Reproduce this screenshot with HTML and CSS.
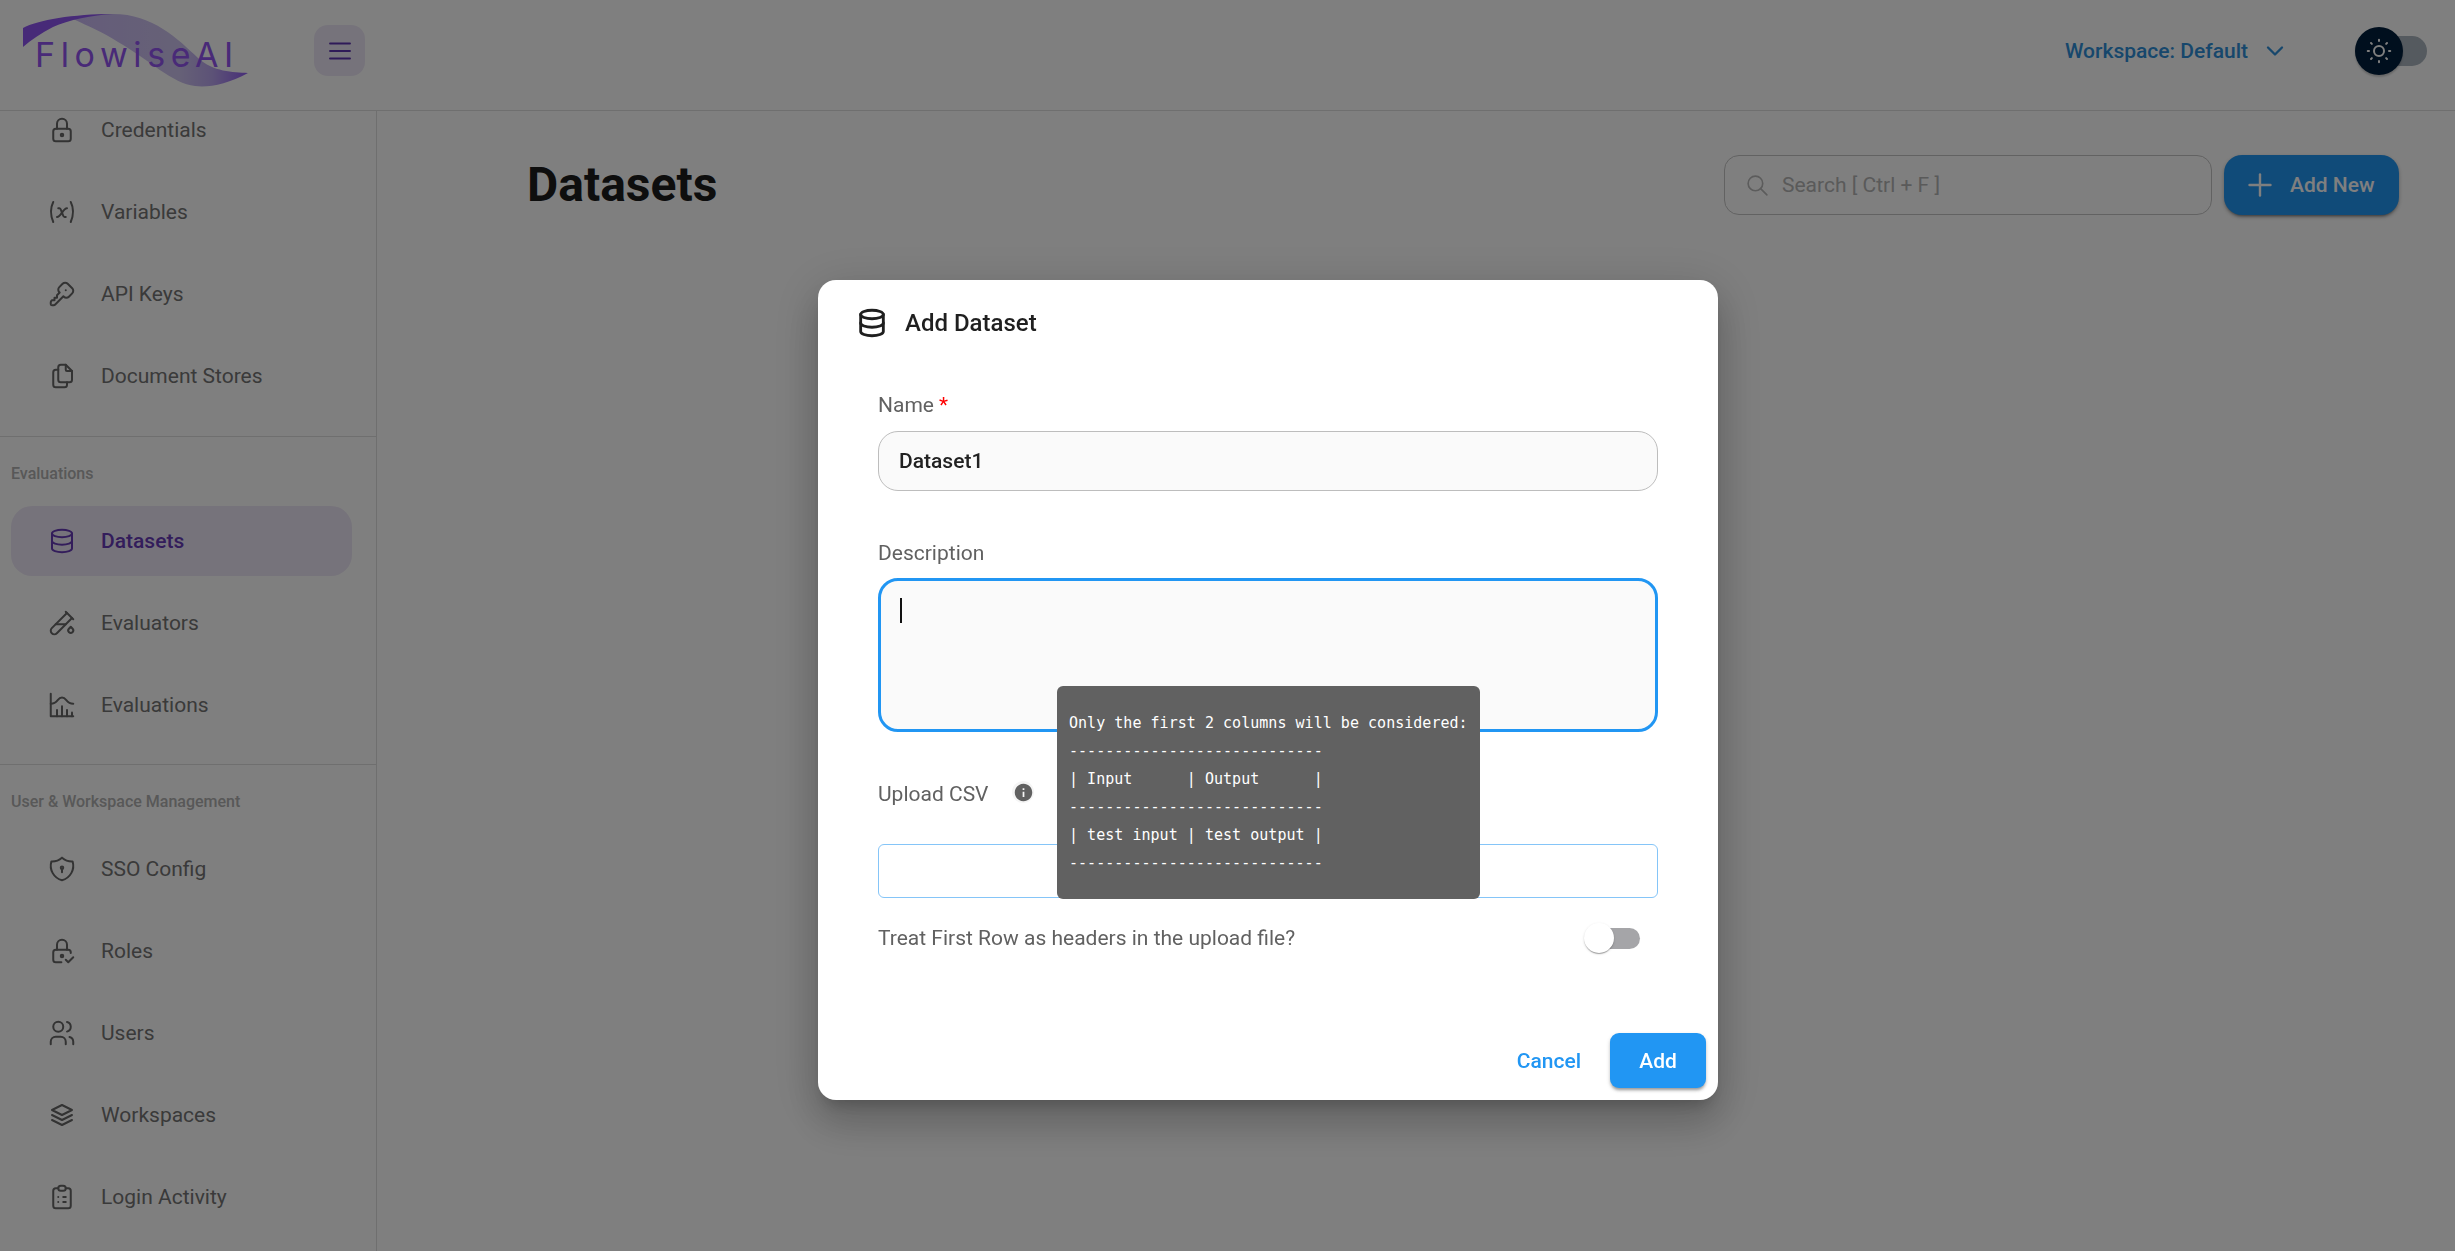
FILE: index.html
```html
<!DOCTYPE html>
<html lang="en">
<head>
<meta charset="utf-8">
<title>Datasets - FlowiseAI</title>
<link rel="stylesheet" href="styles.css">
</head>
<body>
<div class="app">
  <header class="topbar">
    <div class="logo">
      <svg class="logo-wave" viewBox="0 0 225 73" aria-hidden="true">
        <defs>
          <linearGradient id="wave" x1="0" y1="0" x2="1" y2="0">
            <stop offset="0" stop-color="#c9b8f4"/>
            <stop offset="0.6" stop-color="#cdc3ee"/>
            <stop offset="0.8" stop-color="#b9a4ee"/>
            <stop offset="1" stop-color="#8f5cf0"/>
          </linearGradient>
        </defs>
        <path fill="url(#wave)" d="M50 5C65 1 78 0 90 0C130 0 155 25 175 44C190 58 210 58 225 59C205 70 185 74 172 72C150 70 125 45 95 28C80 18 65 12 50 5Z"/>
        <path fill="#8f55f0" d="M0 14C15 6 50 0 90 0C70 1 45 6 30 13C18 19 8 26 0 33Z"/>
      </svg>
      <span class="logo-text">FlowiseAI</span>
    </div>
    <button class="menu-btn" type="button" aria-label="Menu">
      <svg class="icon" viewBox="0 0 24 24"><path d="M4 6h16M4 12h16M4 18h16"/></svg>
    </button>
    <div class="topbar-spacer"></div>
    <span class="workspace">Workspace: Default</span>
    <svg class="icon chevron" viewBox="0 0 24 24"><path d="M6 9l6 6l6 -6"/></svg>
    <div class="theme-toggle">
      <div class="theme-thumb">
        <svg class="icon" viewBox="0 0 24 24"><path d="M12 12m-4 0a4 4 0 1 0 8 0a4 4 0 1 0 -8 0"/><path d="M3 12h1m8 -9v1m8 8h1m-9 8v1m-6.4 -15.4l.7 .7m12.1 -.7l-.7 .7m0 11.4l.7 .7m-12.1 -.7l-.7 .7"/></svg>
      </div>
    </div>
  </header>

  <div class="body-row">
    <nav class="sidebar">
      <div class="nav-scroll">
        <a class="nav-item"><svg class="icon" viewBox="0 0 24 24"><rect x="5" y="11" width="14" height="10" rx="2"/><circle cx="12" cy="16" r="1"/><path d="M8 11v-4a4 4 0 0 1 8 0v4"/></svg><span>Credentials</span></a>
        <a class="nav-item"><svg class="icon" viewBox="0 0 24 24"><path d="M5 4c-2.5 5 -2.5 10 0 16m14 -16c2.5 5 2.5 10 0 16m-10 -11h1c1 0 1 1 2.016 3.527c.984 2.473 .984 3.473 1.984 3.473h1"/><path d="M8 16c1.5 0 3 -2 4 -3.5s2.5 -3.5 4 -3.5"/></svg><span>Variables</span></a>
        <a class="nav-item"><svg class="icon" viewBox="0 0 24 24"><path d="M16.555 3.843l3.602 3.602a2.877 2.877 0 0 1 0 4.069l-2.643 2.643a2.877 2.877 0 0 1 -4.069 0l-.301 -.301l-6.558 6.558a2 2 0 0 1 -1.239 .578l-.175 .008h-1.172a1 1 0 0 1 -.993 -.883l-.007 -.117v-1.172a2 2 0 0 1 .467 -1.284l.119 -.13l.414 -.414h2v-2h2v-2l2.144 -2.144l-.301 -.301a2.877 2.877 0 0 1 0 -4.069l2.643 -2.643a2.877 2.877 0 0 1 4.069 0z"/><path d="M15 9h.01"/></svg><span>API Keys</span></a>
        <a class="nav-item"><svg class="icon" viewBox="0 0 24 24"><path d="M15 3v4a1 1 0 0 0 1 1h4"/><path d="M18 17h-7a2 2 0 0 1 -2 -2v-10a2 2 0 0 1 2 -2h4l5 5v7a2 2 0 0 1 -2 2z"/><path d="M16 17v2a2 2 0 0 1 -2 2h-7a2 2 0 0 1 -2 -2v-10a2 2 0 0 1 2 -2h2"/></svg><span>Document Stores</span></a>

        <div class="nav-divider"></div>
        <div class="nav-label">Evaluations</div>
        <a class="nav-item is-active"><svg class="icon" viewBox="0 0 24 24"><path d="M12 6m-8 0a8 3 0 1 0 16 0a8 3 0 1 0 -16 0"/><path d="M4 6v6a8 3 0 0 0 16 0v-6"/><path d="M4 12v6a8 3 0 0 0 16 0v-6"/></svg><span>Datasets</span></a>
        <a class="nav-item"><svg class="icon" viewBox="0 0 24 24"><path d="M20 8.04l-12.122 12.124a2.857 2.857 0 1 1 -4.041 -4.04l12.122 -12.124"/><path d="M7 13h8"/><path d="M19 15l1.5 1.6a2 2 0 1 1 -3 0l1.5 -1.6z"/><path d="M15 3l6 6"/></svg><span>Evaluators</span></a>
        <a class="nav-item"><svg class="icon" viewBox="0 0 24 24"><path d="M3 3v18h18"/><path d="M20 18v3"/><path d="M16 16v5"/><path d="M12 13v8"/><path d="M8 16v5"/><path d="M3 11c6 0 5 -5 9 -5s3 5 9 5"/></svg><span>Evaluations</span></a>

        <div class="nav-divider"></div>
        <div class="nav-label">User &amp; Workspace Management</div>
        <a class="nav-item"><svg class="icon" viewBox="0 0 24 24"><path d="M12 3a12 12 0 0 0 8.5 3a12 12 0 0 1 -8.5 15a12 12 0 0 1 -8.5 -15a12 12 0 0 0 8.5 -3"/><path d="M12 11m-1 0a1 1 0 1 0 2 0a1 1 0 1 0 -2 0"/><path d="M12 12l0 2.5"/></svg><span>SSO Config</span></a>
        <a class="nav-item"><svg class="icon" viewBox="0 0 24 24"><path d="M11.5 21h-4.5a2 2 0 0 1 -2 -2v-6a2 2 0 0 1 2 -2h10a2 2 0 0 1 2 2v.5"/><path d="M11 16a1 1 0 1 0 2 0a1 1 0 0 0 -2 0"/><path d="M8 11v-4a4 4 0 1 1 8 0v4"/><path d="M15 19l2 2l4 -4"/></svg><span>Roles</span></a>
        <a class="nav-item"><svg class="icon" viewBox="0 0 24 24"><path d="M9 7m-4 0a4 4 0 1 0 8 0a4 4 0 1 0 -8 0"/><path d="M3 21v-2a4 4 0 0 1 4 -4h4a4 4 0 0 1 4 4v2"/><path d="M16 3.13a4 4 0 0 1 0 7.75"/><path d="M21 21v-2a4 4 0 0 0 -3 -3.85"/></svg><span>Users</span></a>
        <a class="nav-item"><svg class="icon" viewBox="0 0 24 24"><path d="M12 4l-8 4l8 4l8 -4l-8 -4"/><path d="M4 12l8 4l8 -4"/><path d="M4 16l8 4l8 -4"/></svg><span>Workspaces</span></a>
        <a class="nav-item"><svg class="icon" viewBox="0 0 24 24"><path d="M9 5h-2a2 2 0 0 0 -2 2v12a2 2 0 0 0 2 2h10a2 2 0 0 0 2 -2v-12a2 2 0 0 0 -2 -2h-2"/><path d="M9 3m0 2a2 2 0 0 1 2 -2h2a2 2 0 0 1 2 2v0a2 2 0 0 1 -2 2h-2a2 2 0 0 1 -2 -2z"/><path d="M9 12l.01 0"/><path d="M13 12l2 0"/><path d="M9 16l.01 0"/><path d="M13 16l2 0"/></svg><span>Login Activity</span></a>
      </div>
    </nav>

    <main class="content">
      <div class="page-head">
        <h1 class="page-title">Datasets</h1>
        <div class="page-spacer"></div>
        <div class="search-box">
          <svg class="icon" viewBox="0 0 24 24"><path d="M10 10m-7 0a7 7 0 1 0 14 0a7 7 0 1 0 -14 0"/><path d="M21 21l-6 -6"/></svg>
          <span class="search-placeholder">Search [ Ctrl + F ]</span>
        </div>
        <button class="add-new" type="button">
          <svg class="icon" viewBox="0 0 24 24"><path d="M12 5v14"/><path d="M5 12h14"/></svg>
          <span>Add New</span>
        </button>
      </div>
    </main>
  </div>
</div>

<div class="backdrop">
  <section class="dialog" role="dialog" aria-label="Add Dataset">
    <div class="dialog-title">
      <svg class="icon" viewBox="0 0 24 24"><path d="M12 6m-8 0a8 3 0 1 0 16 0a8 3 0 1 0 -16 0"/><path d="M4 6v6a8 3 0 0 0 16 0v-6"/><path d="M4 12v6a8 3 0 0 0 16 0v-6"/></svg>
      <span>Add Dataset</span>
    </div>
    <div class="dialog-body">
      <div class="field-label field-name">Name <span class="required">*</span></div>
      <div class="text-input">Dataset1</div>
      <div class="field-label field-desc">Description</div>
      <div class="text-area"><span class="caret"></span></div>
      <div class="field-label field-upload">
        <span>Upload CSV</span>
        <span class="info-dot">
          <svg viewBox="0 0 24 24"><path d="M12 2C6.48 2 2 6.48 2 12s4.48 10 10 10 10-4.48 10-10S17.52 2 12 2zm1 15h-2v-6h2v6zm0-8h-2V7h2v2z"/></svg>
        </span>
      </div>
      <div class="file-box"></div>
      <div class="switch-row">
        <span class="field-text">Treat First Row as headers in the upload file?</span>
        <span class="switch"><span class="switch-thumb"></span></span>
      </div>
    </div>
    <div class="dialog-actions">
      <button class="btn-cancel" type="button">Cancel</button>
      <button class="btn-add" type="button">Add</button>
    </div>
    <pre class="tooltip">Only the first 2 columns will be considered:
----------------------------
| Input      | Output      |
----------------------------
| test input | test output |
----------------------------</pre>
  </section>
</div>
</body>
</html>
```
FILE: styles.css
```css
* { box-sizing: border-box; }
html, body { height: 100%; }
body {
  margin: 0;
  background: #fff;
  font-family: Roboto, "Liberation Sans", sans-serif;
  overflow: hidden;
}
button { font-family: inherit; border: 0; cursor: pointer; }
.icon {
  fill: none;
  stroke: currentColor;
  stroke-width: 1.6;
  stroke-linecap: round;
  stroke-linejoin: round;
  flex: none;
}

.app { height: 1251px; display: flex; flex-direction: column; }

/* top bar */
.topbar {
  height: 111px;
  flex: none;
  display: flex;
  align-items: center;
  padding: 0 28px 9px 23px;
  border-bottom: 1px solid #dedede;
}
.logo { position: relative; width: 225px; height: 73px; flex: none; }
.logo-wave { position: absolute; inset: 0; width: 225px; height: 73px; }
.logo-text {
  position: absolute;
  left: 12px;
  top: 19px;
  font-family: Inter, "Open Sans", sans-serif;
  font-size: 34px;
  line-height: 44px;
  letter-spacing: 5.6px;
  color: #9354f0;
  white-space: nowrap;
}
.menu-btn {
  margin-left: 66px;
  width: 51px;
  height: 51px;
  border-radius: 14px;
  background: #ede7f6;
  color: #5e35b1;
  display: flex;
  align-items: center;
  justify-content: center;
  padding: 0;
}
.menu-btn .icon { width: 30px; height: 30px; stroke-width: 1.5; }
.topbar-spacer { flex: 1; }
.workspace { font-size: 21px; font-weight: 500; color: #2f8fd8; }
.chevron { width: 28px; height: 28px; margin-left: 13px; color: #2f8fd8; stroke-width: 2; }
.theme-toggle {
  position: relative;
  margin-left: 66px;
  width: 72px;
  height: 30px;
  border-radius: 15px;
  background: #aab4be;
}
.theme-thumb {
  position: absolute;
  left: 0;
  top: -9px;
  width: 48px;
  height: 48px;
  border-radius: 50%;
  background: #001e3c;
  color: #fff;
  display: flex;
  align-items: center;
  justify-content: center;
  box-shadow: 0 2px 2px rgba(0,0,0,.2);
}
.theme-thumb .icon { width: 30px; height: 30px; }

/* layout */
.body-row { flex: 1; display: flex; min-height: 0; }
.sidebar {
  width: 377px;
  flex: none;
  border-right: 1px solid #dedede;
  overflow: hidden;
  padding: 0 24px 0 11px;
}
.nav-scroll { margin-top: -16px; }
.nav-item {
  height: 70px;
  margin-bottom: 12px;
  padding-left: 36px;
  display: flex;
  align-items: center;
  gap: 24px;
  border-radius: 21px;
  font-size: 21px;
  color: #747474;
}
.nav-item .icon { width: 30px; height: 30px; color: #666; }
.nav-item.is-active { background: #ede7f6; color: #673ab7; font-weight: 500; }
.nav-item.is-active .icon { color: #673ab7; }
.nav-divider { height: 1px; margin: 24.6px -24px 0 -11px; background: #dedede; }
.nav-label {
  height: 24px;
  margin-top: 25px;
  margin-bottom: 20px;
  line-height: 24px;
  font-size: 16px;
  font-weight: 500;
  color: #b0b0b0;
  white-space: nowrap;
}

.content { flex: 1; min-width: 0; padding: 44px 56px 0 150px; }
.page-head { display: flex; align-items: center; height: 60px; }
.page-title { margin: 0; font-size: 48px; font-weight: 700; color: #1c1c1c; line-height: 60px; }
.page-spacer { flex: 1; }
.search-box {
  width: 488px;
  height: 60px;
  border: 1px solid #c4c4c4;
  border-radius: 15px;
  display: flex;
  align-items: center;
  padding-left: 20px;
  gap: 12px;
}
.search-box .icon { width: 25px; height: 25px; color: #b9b9b9; }
.search-placeholder { font-size: 21px; color: #b4b4b4; }
.add-new {
  margin-left: 12px;
  width: 175px;
  height: 60px;
  border-radius: 18px;
  background: #2196f3;
  color: #fff;
  display: flex;
  align-items: center;
  padding: 0 0 0 18px;
  gap: 12px;
  font-size: 21px;
  font-weight: 500;
  box-shadow: 0 3px 3px -2px rgba(0,0,0,.4), 0 2px 4px rgba(0,0,0,.25);
}
.add-new .icon { width: 36px; height: 36px; stroke-width: 1.6; }

/* modal */
.backdrop { position: fixed; inset: 0; background: rgba(0,0,0,.5); }
.dialog {
  position: absolute;
  left: 818px;
  top: 280px;
  width: 900px;
  height: 820px;
  background: #fff;
  border-radius: 18px;
  display: flex;
  flex-direction: column;
  box-shadow: 0 11px 15px -7px rgba(0,0,0,.2), 0 24px 38px 3px rgba(0,0,0,.14), 0 9px 46px 8px rgba(0,0,0,.12);
}
.dialog-title {
  margin-top: 26px;
  height: 34px;
  padding-left: 37px;
  display: flex;
  align-items: center;
  gap: 16px;
  font-size: 24px;
  font-weight: 500;
  color: #1f1f1f;
}
.dialog-title .icon { width: 34px; height: 34px; stroke-width: 2; }
.dialog-body { padding: 0 60px; flex: 1; }
.field-label, .field-text { font-size: 21px; color: #616161; }
.field-label { height: 32px; line-height: 32px; display: flex; align-items: center; gap: 5px; }
.field-name { margin-top: 49px; }
.field-desc { margin-top: 46px; }
.field-upload { margin-top: 46px; gap: 24px; }
.required { color: #f00; }
.text-input {
  margin-top: 10px;
  height: 60px;
  border: 1px solid #bdbdbd;
  border-radius: 20px;
  background: #fafafa;
  padding-left: 20px;
  line-height: 58px;
  font-size: 21px;
  font-weight: 500;
  color: #212121;
}
.text-area {
  margin-top: 9px;
  height: 154px;
  border: 3px solid #2196f3;
  border-radius: 20px;
  background: #fafafa;
  padding: 17px 0 0 19px;
}
.caret { display: block; width: 2px; height: 25px; background: #111; }
.info-dot {
  width: 22px;
  height: 22px;
  border-radius: 50%;
  background: #f5f5f5;
  display: flex;
  align-items: center;
  justify-content: center;
  margin-top: -4px;
}
.info-dot svg { width: 21px; height: 21px; fill: #616161; }
.file-box {
  margin-top: 34px;
  height: 54px;
  border: 1px solid #85c5f8;
  border-radius: 6px;
}
.switch-row {
  margin-top: 20px;
  height: 40px;
  display: flex;
  align-items: center;
  justify-content: space-between;
  padding-right: 18px;
}
.switch { position: relative; display: block; width: 42px; height: 21px; border-radius: 11px; background: #a5a5a8; }
.switch-thumb {
  position: absolute;
  left: -14px;
  top: -5px;
  width: 30px;
  height: 30px;
  border-radius: 50%;
  background: #fff;
  box-shadow: 0 2px 1px -1px rgba(0,0,0,.2), 0 1px 1px rgba(0,0,0,.14), 0 1px 3px rgba(0,0,0,.12);
}
.dialog-actions {
  display: flex;
  align-items: center;
  justify-content: flex-end;
  gap: 29px;
  padding: 0 12px 12px 0;
}
.btn-cancel { background: none; padding: 0; font-size: 21px; font-weight: 500; color: #2196f3; }
.btn-add {
  width: 96px;
  height: 55px;
  border-radius: 9px;
  background: #2196f3;
  color: #fff;
  font-size: 21px;
  font-weight: 500;
  box-shadow: 0 3px 3px -1px rgba(0,0,0,.3), 0 2px 4px rgba(0,0,0,.16);
}
.tooltip {
  position: absolute;
  left: 239px;
  top: 406px;
  width: 423px;
  height: 213px;
  margin: 0;
  padding: 23px 12px 22px;
  border-radius: 6px;
  background: #616161;
  color: #fff;
  font-family: "DejaVu Sans Mono", monospace;
  font-size: 15px;
  letter-spacing: .03px;
  line-height: 28px;
}
```
